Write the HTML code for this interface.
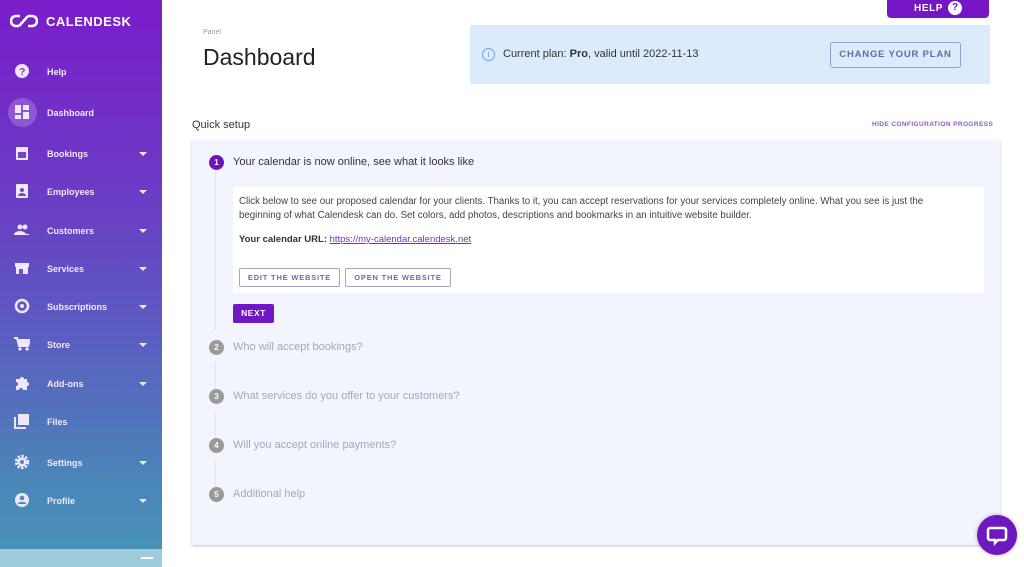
<!DOCTYPE html><html><head><style>
*{margin:0;padding:0;box-sizing:border-box}
body{width:1024px;height:567px;overflow:hidden;background:#fff;font-family:"Liberation Sans",sans-serif;position:relative}
.sb{position:absolute;left:0;top:0;width:162px;height:567px;background:linear-gradient(180deg,#7a1dca 0%,#6b3cc4 35%,#5a5fc0 60%,#4a86b8 85%,#4694b6 100%)}
.sb .bot{position:absolute;left:0;bottom:0;width:162px;height:18px;background:#9ccbdb}
.logo{position:absolute;left:10px;top:14px;color:#fff;font-weight:bold;font-size:13px;letter-spacing:.5px}
.it{position:absolute;left:0;width:162px;height:20px;color:#f0e8ff;font-size:9px;font-weight:bold}
.it span{position:absolute;left:47px;top:5px}
.it svg{position:absolute;left:14px;top:1px}
.it b{position:absolute;left:139px;top:8px;border:4px solid transparent;border-top:4px solid #efe6ff;border-bottom:0}
.act{position:absolute;left:8px;top:98px;width:29px;height:29px;border-radius:50%;background:rgba(255,255,255,.2)}
.help{position:absolute;left:887px;top:0;width:102px;height:18px;background:#7516c4;border-radius:0 0 4px 4px;color:#fff;font-size:10px;font-weight:bold;padding:3px 0 0 27px;letter-spacing:.6px}
.help em{position:absolute;left:61px;top:1px;width:14px;height:14px;border-radius:50%;background:#fff;color:#7516c4;font-style:normal;text-align:center;font-size:10px;line-height:14px;letter-spacing:0}
.plan{position:absolute;left:470px;top:25px;width:520px;height:59px;background:#dcebfb}
.plan .t{position:absolute;left:33px;top:23px;font-size:11px;color:#333}
.plan .ic{position:absolute;left:12px;top:23px;width:13px;height:13px;border:1px solid #6a9ee6;border-radius:50%;font-size:8px;color:#6a9ee6;text-align:center;line-height:11px}
.plan .btn{position:absolute;left:360px;top:17px;width:131px;height:26px;border:1px solid #8aa4d6;border-radius:3px;color:#5a6fa8;font-size:9.5px;font-weight:bold;letter-spacing:.8px;text-align:center;line-height:24px}
.card{position:absolute;left:192px;top:140px;width:808px;height:405px;background:#f2f5fd;box-shadow:0 1px 2px rgba(0,0,0,.25)}
.circ{position:absolute;width:15px;height:15px;border-radius:50%;background:#9a9a9a;color:#fff;font-size:8px;text-align:center;line-height:15px;font-weight:bold}
.st{position:absolute;font-size:11px;color:#a5a8b2}
.line{position:absolute;left:23px;width:1px;background:#e2e4ea}
</style></head><body>
<div class="sb"><div class="bot"><div style="position:absolute;left:141px;top:8px;width:12px;height:2px;background:#fff"></div></div>
<div class="logo"><svg width="28" height="14" viewBox="0 0 28 14" style="vertical-align:-2px"><path d="M10 2H6a5 5 0 0 0 0 10h3M18 2h4a5 5 0 0 1 0 10h-4M9 12l9-10" fill="none" stroke="#fff" stroke-width="2.6"/></svg><span style="margin-left:8px">CALENDESK</span></div>
<div class="act"></div>
<div class="it" style="top:62px"><svg width="16" height="16"><circle cx="8" cy="8" r="7" fill="#efe6ff"/><text x="5.3" y="12" font-size="10" font-weight="bold" fill="#7a3cc8" font-family="Liberation Sans">?</text></svg><span>Help</span></div>
<div class="it" style="top:103px"><svg width="16" height="16"><path d="M1 1h6v8H1zM9 1h6v5H9zM1 11h6v4H1zM9 8h6v7H9z" fill="#efe6ff"/></svg><span>Dashboard</span></div>
<div class="it" style="top:144px"><svg width="16" height="16"><rect x="2" y="2" width="12" height="13" rx="1" fill="#efe6ff"/><rect x="4" y="7" width="8" height="6" fill="#7046c6"/></svg><span>Bookings</span><b></b></div>
<div class="it" style="top:182px"><svg width="16" height="16"><rect x="2" y="1" width="12" height="14" rx="1" fill="#efe6ff"/><circle cx="8" cy="7" r="2" fill="#6a4ac4"/><path d="M4 13a4 3 0 0 1 8 0z" fill="#6a4ac4"/></svg><span>Employees</span><b></b></div>
<div class="it" style="top:221px"><svg width="16" height="16"><circle cx="6" cy="5" r="2.5" fill="#efe6ff"/><circle cx="11" cy="5" r="2.5" fill="#efe6ff"/><path d="M0 13a6 4 0 0 1 12 0zM9 13a5 4 0 0 1 7 0z" fill="#efe6ff"/></svg><span>Customers</span><b></b></div>
<div class="it" style="top:259px"><svg width="16" height="16"><path d="M1 3h14v4H1zM2 7h12v7H2z" fill="#efe6ff"/><rect x="5" y="9" width="4" height="5" fill="#5f5cc2"/></svg><span>Services</span><b></b></div>
<div class="it" style="top:297px"><svg width="16" height="16"><circle cx="8" cy="8" r="6" fill="none" stroke="#efe6ff" stroke-width="2.5"/><circle cx="8" cy="8" r="2" fill="#efe6ff"/></svg><span>Subscriptions</span><b></b></div>
<div class="it" style="top:335px"><svg width="16" height="16"><path d="M0 2h3l2 8h9l2-6H4" fill="none" stroke="#efe6ff" stroke-width="2"/><circle cx="6" cy="13" r="1.6" fill="#efe6ff"/><circle cx="13" cy="13" r="1.6" fill="#efe6ff"/><path d="M4 4h11l-2 6H5z" fill="#efe6ff"/></svg><span>Store</span><b></b></div>
<div class="it" style="top:374px"><svg width="16" height="16"><path d="M2 4h4a2 2 0 1 1 4 0h3v3a2 2 0 1 1 0 4v4H9a2 2 0 1 0-4 0H2v-4a2 2 0 1 0 0-4z" fill="#efe6ff"/></svg><span>Add-ons</span><b></b></div>
<div class="it" style="top:412px"><svg width="16" height="16"><path d="M1 4v11h11" fill="none" stroke="#efe6ff" stroke-width="2"/><rect x="4" y="1" width="11" height="11" fill="#efe6ff"/></svg><span>Files</span></div>
<div class="it" style="top:453px"><svg width="16" height="16"><circle cx="8" cy="8" r="5.5" fill="none" stroke="#efe6ff" stroke-width="3.5" stroke-dasharray="2.2 1.4"/><circle cx="8" cy="8" r="4.5" fill="#efe6ff"/><circle cx="8" cy="8" r="2" fill="#5083bd"/></svg><span>Settings</span><b></b></div>
<div class="it" style="top:491px"><svg width="16" height="16"><circle cx="8" cy="8" r="7" fill="#efe6ff"/><circle cx="8" cy="6" r="2.3" fill="#4c8cba"/><path d="M3.5 12a5 4 0 0 1 9 0z" fill="#4c8cba"/></svg><span>Profile</span><b></b></div>
</div>
<div class="help">HELP<em>?</em></div>
<div style="position:absolute;left:203px;top:29px;font-size:7px;color:#999">Panel</div>
<div style="position:absolute;left:203px;top:44px;font-size:23px;color:#222">Dashboard</div>
<div class="plan"><div class="ic">i</div><div class="t">Current plan: <b>Pro</b>, valid until 2022-11-13</div><div class="btn">CHANGE YOUR PLAN</div></div>
<div style="position:absolute;left:192px;top:119px;font-size:11px;color:#333">Quick setup</div>
<div style="position:absolute;left:872px;top:121px;font-size:6.5px;color:#8a5bbf;font-weight:bold;letter-spacing:.4px">HIDE CONFIGURATION PROGRESS</div>
<div class="card">
<div class="line" style="top:30px;height:160px"></div>
<div class="line" style="top:222px;height:32px"></div>
<div class="line" style="top:272px;height:32px"></div>
<div class="line" style="top:320px;height:32px"></div>
<div class="circ" style="left:17px;top:15px;background:#6a16b8">1</div>
<div style="position:absolute;left:41px;top:16px;font-size:11px;color:#333">Your calendar is now online, see what it looks like</div>
<div style="position:absolute;left:41px;top:47px;width:751px;height:106px;background:#fff">
<div style="position:absolute;left:6px;top:8px;width:715px;font-size:9.7px;line-height:13.5px;color:#444">Click below to see our proposed calendar for your clients. Thanks to it, you can accept reservations for your services completely online. What you see is just the beginning of what Calendesk can do. Set colors, add photos, descriptions and bookmarks in an intuitive website builder.</div>
<div style="position:absolute;left:6px;top:47px;font-size:9.5px;color:#333"><b>Your calendar URL:</b> <u style="color:#7a2fc0">https://my-calendar.calendesk.net</u></div>
<div style="position:absolute;left:6px;top:81px;width:101px;height:19px;border:1px solid #a0a6c4;border-radius:2px;font-size:7.5px;color:#6670a0;letter-spacing:.8px;text-align:center;line-height:17px;font-weight:bold">EDIT THE WEBSITE</div>
<div style="position:absolute;left:112px;top:81px;width:106px;height:19px;border:1px solid #a0a6c4;border-radius:2px;font-size:7.5px;color:#6670a0;letter-spacing:.8px;text-align:center;line-height:17px;font-weight:bold">OPEN THE WEBSITE</div>
</div>
<div style="position:absolute;left:41px;top:164px;width:41px;height:19px;background:#7016c4;border-radius:2px;color:#fff;font-size:8.5px;font-weight:bold;text-align:center;line-height:19px;letter-spacing:.5px">NEXT</div>
<div class="circ" style="left:17px;top:200px">2</div><div class="st" style="left:41px;top:201px">Who will accept bookings?</div>
<div class="circ" style="left:17px;top:249px">3</div><div class="st" style="left:41px;top:250px">What services do you offer to your customers?</div>
<div class="circ" style="left:17px;top:298px">4</div><div class="st" style="left:41px;top:299px">Will you accept online payments?</div>
<div class="circ" style="left:17px;top:347px">5</div><div class="st" style="left:41px;top:348px">Additional help</div>
</div>
<div style="position:absolute;left:977px;top:515px;width:40px;height:40px;border-radius:50%;background:#6e18c0;box-shadow:0 0 4px rgba(0,0,0,.3)">
<svg width="40" height="40" viewBox="0 0 40 40"><path d="M13 13h14a2 2 0 0 1 2 2v8a2 2 0 0 1-2 2h-6l-3 3v-3h-5a2 2 0 0 1-2-2v-8a2 2 0 0 1 2-2z" fill="none" stroke="#fff" stroke-width="2.5"/></svg></div>
</body></html>
